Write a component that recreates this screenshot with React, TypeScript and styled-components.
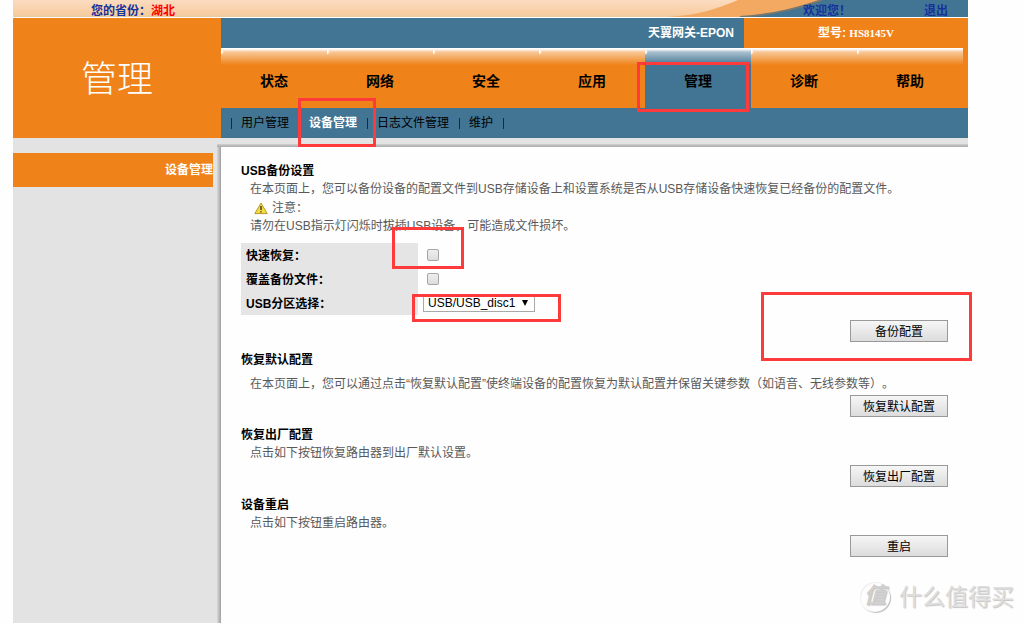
import React from 'react';
import styled, { createGlobalStyle } from 'styled-components';

const ORANGE = '#ef8319';
const BLUE = '#427594';
const GREY = '#e3e3e3';
const RED = '#ff3a3a';

const GlobalStyle = createGlobalStyle`
  * { box-sizing: border-box; }
  body {
    margin: 0;
    background: #fefefe;
    color: #000;
    font: 12px/18px "Liberation Sans", "Noto Sans CJK SC", sans-serif;
    text-spacing-trim: space-all;
    overflow-x: hidden;
  }
  a { color: inherit; text-decoration: none; }
  h1, h2, p, ul { margin: 0; padding: 0; font-size: 12px; list-style: none; }
`;

const Page = styled.div`
  display: flex;
  flex-direction: column;
  min-height: 100vh;
  margin: 0 57px 0 13px;
  position: relative;
`;

const TopStrip = styled.div`
  position: relative;
  display: flex;
  align-items: center;
  height: 18px;
  padding: 4px 20px 0 78px;
  border-bottom: 1px solid #fff;
  background: linear-gradient(#fbdcc0, #f8cda2 80%, #e9cba5);
  color: #13329c;
  font-weight: bold;
  white-space: nowrap;
`;

const Swoosh = styled.svg`
  position: absolute;
  right: 0;
  top: 0;
`;

const Province = styled.span`
  flex: 1;
  em { color: #f00; font-style: normal; }
`;

const TopLinks = styled.span`
  position: relative;
  display: flex;
  justify-content: space-between;
  width: 145px;
`;

const Header = styled.header`
  display: flex;
  height: 120px;
`;

const Title = styled.h1`
  display: flex;
  align-items: center;
  justify-content: center;
  width: 208px;
  padding-bottom: 4px;
  background: ${ORANGE};
  color: #fff;
  font-family: "Noto Sans CJK SC", serif;
  font-size: 36px;
  font-weight: 300;
  line-height: 48px;
`;

const HeaderMain = styled.div`
  flex: 1;
  display: flex;
  flex-direction: column;
  min-width: 0;
`;

const DeviceBar = styled.div`
  display: flex;
  height: 30px;
  line-height: 30px;
  background: ${BLUE};
  color: #fff;
  font-weight: bold;
`;

const Gateway = styled.div`
  flex: 1;
  padding-right: 10px;
  text-align: right;
`;

const Model = styled.div`
  width: 224px;
  background: ${ORANGE};
  text-align: center;
  span { font-family: "Liberation Serif", serif; font-size: 11px; }
`;

const Tabs = styled.nav`
  display: flex;
  height: 60px;
  padding-right: 5px;
  background: ${ORANGE};
`;

const Tab = styled.a<{ $active?: boolean }>`
  flex: 1;
  padding-top: 23px;
  border-top: 1px solid #fff;
  background:
    radial-gradient(circle at 0 3px, #fff 1px, transparent 3px),
    linear-gradient(#fff, rgba(255, 255, 255, 0.55) 3px, rgba(255, 255, 255, 0) 16px),
    ${p => (p.$active ? BLUE : ORANGE)};
  font-size: 14px;
  font-weight: bold;
  text-align: center;
`;

const SubNav = styled.nav`
  display: flex;
  align-items: center;
  height: 30px;
  padding-left: 9px;
  background: ${BLUE};
  white-space: nowrap;
`;

const SubLink = styled.a<{ $active?: boolean }>`
  padding: 0 9px;
  color: ${p => (p.$active ? '#fff' : '#000')};
  font-weight: ${p => (p.$active ? 'bold' : 'normal')};
`;

const Divider = styled.i<{ $hidden?: boolean }>`
  width: 2px;
  height: 11px;
  border-right: 1px solid ${p => (p.$hidden ? 'transparent' : '#16264e')};
`;

const Body = styled.div`
  flex: 1;
  display: flex;
  background: ${GREY};
`;

const Sidebar = styled.aside`
  width: 204px;
  padding: 15px 4px 0 0;
`;

const SideLink = styled.a`
  display: block;
  height: 34px;
  background: ${ORANGE};
  color: #fff;
  font-weight: bold;
  line-height: 34px;
  text-align: right;
`;

const Frame = styled.div`
  flex: 1;
  margin-top: 6px;
  padding: 3px 0 0 4px;
  min-width: 0;
  background:
    linear-gradient(#d0d0d0, #aaa) 0 0 / 100% 3px no-repeat,
    linear-gradient(90deg, #dadada, #a0a0a0) 0 0 / 4px 100% no-repeat;
`;

const Content = styled.main`
  height: 100%;
  padding: 15px 20px 20px;
  background: #fefefe;
`;

const Section = styled.section`
  display: flex;
  flex-direction: column;
  margin-bottom: 9px;
`;

const Heading = styled.h2`
  line-height: 18px;
`;

const Text = styled.p<{ $roomy?: boolean }>`
  padding: ${p => (p.$roomy ? '6px 0 0 9px' : '0 0 0 9px')};
  color: #595959;
  line-height: 19px;
`;

const Notice = styled(Text)`
  display: flex;
  align-items: center;
  gap: 4px;
  padding-left: 13px;
  line-height: 18px;
`;

const Fields = styled.div`
  display: flex;
  flex-direction: column;
  margin-top: 7px;
`;

const Field = styled.div`
  display: flex;
  align-items: center;
  height: 24px;
  label {
    width: 177px;
    height: 24px;
    padding-left: 5px;
    background: #e5e5e5;
    font-weight: bold;
    line-height: 26px;
  }
`;

const Check = styled.input`
  appearance: none;
  width: 12px;
  height: 12px;
  margin: 0 0 0 9px;
  border: 1px solid #a6a6a6;
  border-radius: 2px;
  background: linear-gradient(#efefef, #dcdcdc);
  &:checked { background: ${BLUE}; }
`;

const SelectWrap = styled.span`
  position: relative;
  margin-left: 5px;
  &::after {
    content: "";
    position: absolute;
    right: 7px;
    top: 6px;
    border: 3px solid transparent;
    border-top: 6px solid #000;
    border-bottom: 0;
    pointer-events: none;
  }
`;

const Select = styled.select`
  display: block;
  appearance: none;
  width: 112px;
  height: 18px;
  padding: 0 4px;
  border: 1px solid #a9a9a9;
  border-radius: 0;
  background: #fff;
  color: #000;
  font: 12px/16px "Liberation Sans", sans-serif;
`;

const Button = styled.button<{ $gap?: number }>`
  align-self: flex-end;
  width: 98px;
  height: 22px;
  margin-top: ${p => p.$gap ?? 2}px;
  padding: 2px 0 0;
  border: 1px solid #999;
  background: linear-gradient(#f6f6f6, #dcdcdc);
  color: #000;
  font: 12px/18px "Liberation Sans", "Noto Sans CJK SC", sans-serif;
`;

const Mark = styled.div<{ $x: number; $y: number; $w: number; $h: number }>`
  position: absolute;
  left: ${p => p.$x}px;
  top: ${p => p.$y}px;
  width: ${p => p.$w}px;
  height: ${p => p.$h}px;
  border: 3px solid ${RED};
  pointer-events: none;
`;

const Watermark = styled.div`
  position: absolute;
  right: -46px;
  top: 581px;
  display: flex;
  align-items: center;
  gap: 9px;
  color: #dedede;
  font-size: 23px;
  line-height: 32px;
  text-shadow: 1px 1px 1px #c4c4c4;
  pointer-events: none;
`;

const Badge = styled.span`
  width: 30px;
  height: 30px;
  border-radius: 50%;
  box-shadow: 1px 1px 1px #bbb, inset 1px 1px 1px #eee;
  color: #cfcfcf;
  font-size: 22px;
  font-weight: bold;
  font-style: italic;
  line-height: 28px;
  text-align: center;
`;

const tabs = ['状态', '网络', '安全', '应用', '管理', '诊断', '帮助'];

const WarningIcon = () => (
  <svg width="14" height="13" viewBox="0 0 14 13" aria-hidden="true">
    <path d="M7 1 L13.2 11.6 H0.8 Z" fill="#f6dc3c" stroke="#b59a2c" strokeLinejoin="round" />
    <path d="M7 4 V8 M7 9.2 V10.6" stroke="#333" strokeWidth="1.4" />
  </svg>
);

export default function App() {
  return (
    <>
      <GlobalStyle />
      <Page>
        <TopStrip>
          <Swoosh width="310" height="17" viewBox="0 0 310 17" aria-hidden="true">
            <path d="M8 17 C45 15 60 8 80 0 H310 V17 Z" fill="#f4a962" />
            <path d="M82 17 C120 14 140 8 164 0 H310 V17 Z" fill={BLUE} />
            <path d="M82 17 C120 14 140 8 164 0" fill="none" stroke="#76786f" strokeWidth="2" />
          </Swoosh>
          <Province>您的省份：<em>湖北</em></Province>
          <TopLinks>
            <span>欢迎您！</span>
            <a href="#logout">退出</a>
          </TopLinks>
        </TopStrip>
        <Header>
          <Title>管理</Title>
          <HeaderMain>
            <DeviceBar>
              <Gateway>天翼网关-EPON</Gateway>
              <Model>型号: <span>HS8145V</span></Model>
            </DeviceBar>
            <Tabs>
              {tabs.map(t => (
                <Tab key={t} href="#tab" $active={t === '管理'}>{t}</Tab>
              ))}
            </Tabs>
            <SubNav>
              <Divider />
              <SubLink href="#users">用户管理</SubLink>
              <Divider $hidden />
              <SubLink href="#device" $active>设备管理</SubLink>
              <Divider />
              <SubLink href="#logs">日志文件管理</SubLink>
              <Divider />
              <SubLink href="#maintain">维护</SubLink>
              <Divider />
            </SubNav>
          </HeaderMain>
        </Header>
        <Body>
          <Sidebar>
            <SideLink href="#device">设备管理</SideLink>
          </Sidebar>
          <Frame>
            <Content>
              <Section>
                <Heading>USB备份设置</Heading>
                <Text>在本页面上，您可以备份设备的配置文件到USB存储设备上和设置系统是否从USB存储设备快速恢复已经备份的配置文件。</Text>
                <Notice><WarningIcon />注意：</Notice>
                <Text>请勿在USB指示灯闪烁时拔插USB设备，可能造成文件损坏。</Text>
                <Fields>
                  <Field>
                    <label htmlFor="restore">快速恢复：</label>
                    <Check id="restore" type="checkbox" />
                  </Field>
                  <Field>
                    <label htmlFor="overwrite">覆盖备份文件：</label>
                    <Check id="overwrite" type="checkbox" />
                  </Field>
                  <Field>
                    <label htmlFor="partition">USB分区选择：</label>
                    <SelectWrap>
                      <Select id="partition"><option>USB/USB_disc1</option></Select>
                    </SelectWrap>
                  </Field>
                </Fields>
                <Button type="button" $gap={5}>备份配置</Button>
              </Section>
              <Section>
                <Heading>恢复默认配置</Heading>
                <Text $roomy>在本页面上，您可以通过点击“恢复默认配置”使终端设备的配置恢复为默认配置并保留关键参数（如语音、无线参数等）。</Text>
                <Button type="button" $gap={1}>恢复默认配置</Button>
              </Section>
              <Section>
                <Heading>恢复出厂配置</Heading>
                <Text>点击如下按钮恢复路由器到出厂默认设置。</Text>
                <Button type="button">恢复出厂配置</Button>
              </Section>
              <Section>
                <Heading>设备重启</Heading>
                <Text>点击如下按钮重启路由器。</Text>
                <Button type="button">重启</Button>
              </Section>
            </Content>
          </Frame>
        </Body>
        <Mark $x={624} $y={62} $w={112} $h={50} />
        <Mark $x={285} $y={98} $w={78} $h={49} />
        <Mark $x={379} $y={227} $w={72} $h={42} />
        <Mark $x={399} $y={294} $w={149} $h={28} />
        <Mark $x={748} $y={292} $w={211} $h={69} />
        <Watermark><Badge>值</Badge>什么值得买</Watermark>
      </Page>
    </>
  );
}
